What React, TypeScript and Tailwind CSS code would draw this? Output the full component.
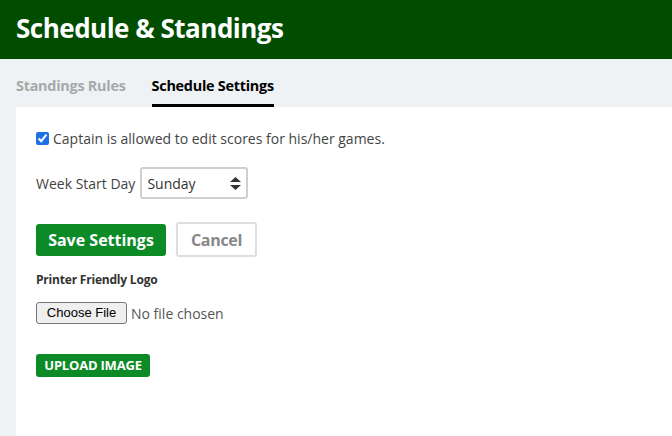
import { useState } from "react";

const App = () => {
    const [captainEdit, setCaptainEdit] = useState(true);
    const [weekStart, setWeekStart] = useState("Sunday");

    return (
        <div className="flex flex-col w-[672px] h-[436px] bg-[#eef2f5] font-['Open_Sans',sans-serif] overflow-hidden">
            <div className="h-[59px] shrink-0 bg-[#004d00] flex items-center px-4">
                <h1 className="text-white text-[26px] font-bold tracking-[-0.5px] leading-none pb-[3px]">
                    Schedule &amp; Standings
                </h1>
            </div>

            <div className="h-[48px] shrink-0 flex items-end gap-[26px] px-4">
                <button className="text-[14.4px] font-bold text-[#a8a8a8] tracking-[-0.25px] pb-[10px]">
                    Standings Rules
                </button>
                <button className="text-[14.4px] font-bold text-black tracking-[-0.25px] pb-[7px] border-b-[3px] border-black">
                    Schedule Settings
                </button>
            </div>

            <div className="flex-1 ml-4 bg-white pl-5 pt-[21px]">
                <label className="flex items-center gap-[4px] text-[14px] text-[#444]">
                    <input
                        type="checkbox"
                        checked={captainEdit}
                        onChange={(e) => setCaptainEdit(e.target.checked)}
                        className="w-[13px] h-[13px] m-0 accent-[#1f6fe5]"
                    />
                    Captain is allowed to edit scores for his/her games.
                </label>

                <div className="flex items-center gap-[5px] mt-[18px] text-[14px] text-[#444]">
                    <span>Week Start Day</span>
                    <div className="relative">
                        <select
                            value={weekStart}
                            onChange={(e) => setWeekStart(e.target.value)}
                            className="appearance-none w-[108px] h-[32px] border-2 border-[#cfcfcf] rounded-[3px] pl-[5px] text-[14px] text-[#333] bg-white"
                        >
                            <option>Sunday</option>
                            <option>Monday</option>
                        </select>
                        <svg className="absolute right-[7px] top-[10px] pointer-events-none" width="11" height="13" viewBox="0 0 11 13">
                            <path d="M5.5 0 L11 5 H0 Z" fill="#333" />
                            <path d="M0 8 H11 L5.5 13 Z" fill="#333" />
                        </svg>
                    </div>
                </div>

                <div className="flex items-center gap-[10px] mt-[23px]">
                    <button className="w-[130px] h-[32px] rounded-[3px] bg-[#0b8a25] text-white text-[16px] font-bold">
                        Save Settings
                    </button>
                    <button className="w-[81px] h-[35px] rounded-[3px] border-2 border-[#dedede] bg-white text-[#888] text-[16px] font-bold tracking-[-0.3px]">
                        Cancel
                    </button>
                </div>

                <p className="mt-[14px] text-[12px] font-bold text-[#333] tracking-[-0.2px]">Printer Friendly Logo</p>

                <div className="flex items-center gap-[4px] mt-[13px]">
                    <button className="w-[91px] h-[22px] rounded-[3px] border border-[#767676] bg-[#efefef] text-[13px] text-black font-['Liberation_Sans',sans-serif]">
                        Choose File
                    </button>
                    <span className="text-[14px] text-[#555]">No file chosen</span>
                </div>

                <button className="mt-[30px] w-[114px] h-[23px] rounded-[3px] bg-[#0b8a25] text-white text-[13px] font-bold tracking-[-0.2px]">
                    UPLOAD IMAGE
                </button>
            </div>
        </div>
    );
};

export default App;
